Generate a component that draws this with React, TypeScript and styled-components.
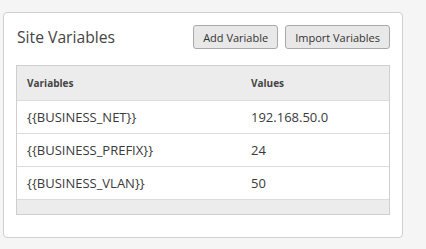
import React from 'react';
import styled, { createGlobalStyle } from 'styled-components';

interface IVariable {
    name: string;
    value: string;
}

const variables: IVariable[] = [
    { name: '{{BUSINESS_NET}}', value: '192.168.50.0' },
    { name: '{{BUSINESS_PREFIX}}', value: '24' },
    { name: '{{BUSINESS_VLAN}}', value: '50' },
];

const GlobalStyle = createGlobalStyle`
    body {
        margin: 0;
        background: #f5f5f5;
        font-family: 'Open Sans', 'Noto Sans', sans-serif;
        color: #333;
    }
`;

const App = () => {
    return (
        <>
            <GlobalStyle />
            <StyledCard>
                <StyledHeader>
                    <h2>Site Variables</h2>
                    <StyledActions>
                        <StyledButton>Add Variable</StyledButton>
                        <StyledButton>Import Variables</StyledButton>
                    </StyledActions>
                </StyledHeader>
                <StyledTable>
                    <StyledRow $head>
                        <div>Variables</div>
                        <div>Values</div>
                    </StyledRow>
                    {variables.map((v) => (
                        <StyledRow key={v.name}>
                            <div>{v.name}</div>
                            <div>{v.value}</div>
                        </StyledRow>
                    ))}
                    <StyledFooter />
                </StyledTable>
            </StyledCard>
        </>
    );
};

const StyledCard = styled.div`
    box-sizing: border-box;
    width: 400px;
    height: 226px;
    margin: 12px 0 0 3px;
    padding: 12px 12px 0 12px;
    background: #fff;
    border: 1px solid #cfcfcf;
    border-radius: 4px;
`;

const StyledHeader = styled.div`
    display: flex;
    justify-content: space-between;
    align-items: center;
    height: 24px;
    margin-bottom: 16px;
    h2 {
        margin: 0 0 0 1px;
        font-size: 15.7px;
        font-weight: 400;
        color: #444;
    }
`;

const StyledActions = styled.div`
    display: flex;
    gap: 7px;
`;

const StyledButton = styled.button`
    box-sizing: border-box;
    height: 24px;
    padding: 0 9px;
    font-family: 'Open Sans', 'Noto Sans', sans-serif;
    font-size: 11px;
    color: #333;
    background: #e8e8e8;
    border: 1px solid #a9a9a9;
    border-radius: 3px;
`;

const StyledTable = styled.div`
    border: 1px solid #cfcfcf;
    display: flex;
    flex-direction: column;
`;

const StyledRow = styled.div<{ $head?: boolean }>`
    display: grid;
    grid-template-columns: 224px 1fr;
    align-items: center;
    box-sizing: border-box;
    height: ${(p) => (p.$head ? '35px' : '33px')};
    padding: 0 10px;
    background: ${(p) => (p.$head ? '#ececec' : '#fff')};
    border-bottom: 1px solid #dcdcdc;
    font-size: ${(p) => (p.$head ? '10px' : '13px')};
    font-weight: ${(p) => (p.$head ? 700 : 400)};
    color: ${(p) => (p.$head ? '#444' : '#3a3a3a')};
`;

const StyledFooter = styled.div`
    height: 14px;
    background: #ececec;
`;

export default App;
